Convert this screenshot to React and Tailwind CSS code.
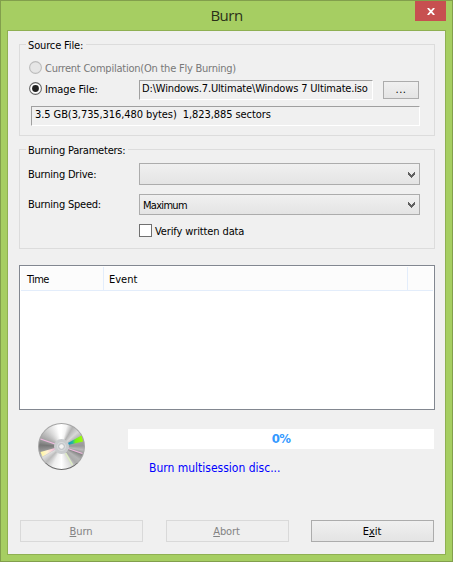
const Label = ({ className = '', children }) => (
  <span className={`block whitespace-pre leading-[14px] ${className}`}>{children}</span>
);

const Group = ({ title, titleClass, className, children }) => (
  <fieldset className={`relative border border-[#dcdcdc] ${className}`}>
    <div className={`absolute -top-[6px] left-[6px] h-[14px] bg-[#f0f0f0] pl-[2px] ${titleClass}`}>
      <Label>{title}</Label>
    </div>
    {children}
  </fieldset>
);

const Radio = ({ checked }) => (
  <svg width="13" height="13" viewBox="0 0 13 13" className="shrink-0">
    <circle
      cx="6.5"
      cy="6.5"
      r="5.9"
      fill={checked ? '#ffffff' : '#e6e6e6'}
      stroke={checked ? '#666666' : '#bcbcbc'}
      strokeWidth="1.1"
    />
    {checked && <circle cx="6.5" cy="6.5" r="3.4" fill="#212121" />}
  </svg>
);

const Combo = ({ value, className }) => (
  <div
    className={`flex w-[281px] justify-between border border-[#acacac] bg-linear-to-b from-[#f0f0f0] to-[#e4e4e4] pr-[4px] pl-[3px] ${className}`}
  >
    <Label className="pt-[4px] tracking-[-0.7px]">{value}</Label>
    <svg width="7" height="6" viewBox="0 0 7 6" className="mt-[7px]" shapeRendering="crispEdges">
      <path d="M0 0h1v1h1v1h1v1h1v-1h1v-1h1v-1h1v3h-1v1h-1v1h-1v1h-1v-1h-1v-1h-1v-1h-1z" fill="#606060" />
    </svg>
  </div>
);

const Disc = () => (
  <div className="relative size-[47px] rounded-full border border-[#a4a4a4] border-b-[#686868] bg-[conic-gradient(#fff_0deg,#f4f4f4_14deg,#b2b2b2_30deg,#d8d8d8_48deg,#aaa_65deg,#999_88deg,#b9b9b9_99deg,#888_112deg,#b5b5b5_126deg,#aaa_140deg,#ddd_154deg,#fff_180deg,#eee_204deg,#bbb_224deg,#ddd_239deg,#999_256deg,#777_274deg,#a0a0a0_290deg,#bbb_306deg,#ddd_326deg,#fff_350deg)]">
    <svg width="45" height="45" viewBox="0 0 45 45" className="block">
      <defs>
        <linearGradient id="green" x1="0" x2="1">
          <stop offset="0" stopColor="#168cc8" />
          <stop offset=".3" stopColor="#24b9a0" />
          <stop offset=".5" stopColor="#72f21c" />
          <stop offset="1" stopColor="#a2ff00" />
        </linearGradient>
        <linearGradient id="warm" x1="0" x2="1">
          <stop offset="0" stopColor="#fff79b" />
          <stop offset=".45" stopColor="#fff3d2" />
          <stop offset="1" stopColor="#f0b5db" />
        </linearGradient>
      </defs>
      <path d="M29 19L42.5 11.5L44 17.5L29 21z" fill="url(#green)" />
      <path d="M16 24L1.5 28L3.5 32.5L16 25.5z" fill="url(#warm)" />
      <path d="M1.5 15L16 20M29 24.5L43.5 29.5" stroke="#f0b9df" strokeWidth="1.3" />
      <path d="M26.5 29L33.5 41" stroke="#ddecc5" strokeWidth="1.5" />
      <circle cx="22.5" cy="22.5" r="6" fill="#d9dbdd" stroke="#c9ccce" strokeWidth="3" />
      <circle cx="22.5" cy="22.5" r="3" fill="#e4e4e4" stroke="#bcc0c3" strokeWidth="1" />
      <circle cx="22.5" cy="22.5" r="1.8" fill="#f4f4f4" />
    </svg>
  </div>
);

const Button = ({ disabled, children }) => (
  <button
    className={`h-[22px] w-[123px] border pt-[1px] pr-[1px] leading-[19px] tracking-[-0.1px] ${
      disabled
        ? 'border-[#d9d9d9] bg-[#efefef] text-[#838383]'
        : 'border-[#acacac] bg-linear-to-b from-[#f0f0f0] to-[#e4e4e4] text-black'
    }`}
    disabled={disabled}
  >
    {children}
  </button>
);

const Key = ({ children }) => (
  <span className="underline decoration-1 underline-offset-1">{children}</span>
);

const App = () => {
  return (
    <div className="flex h-[562px] w-[453px] flex-col border border-[#829f4c] bg-[#a6ce62] font-['DejaVu_Sans_Condensed','DejaVu_Sans',sans-serif] text-[11px] font-stretch-condensed text-black">
      <header className="grid h-[29px] grid-cols-[31px_1fr_31px] pr-[6px] pl-[6px]">
        <div />
        <h1 className="pt-[4px] text-center font-['Open_Sans','Noto_Sans',sans-serif] text-[15px] leading-[20px] tracking-[-0.5px] text-[#2b3019] font-stretch-normal">
          Burn
        </h1>
        <button className="flex h-[20px] w-[31px] items-center justify-center bg-[#c75050]">
          <svg width="8" height="7" viewBox="0 0 8 7" className="mt-[1px]">
            <path d="M.8 0L7.2 7M7.2 0L.8 7" stroke="#fff" strokeWidth="1.8" />
          </svg>
        </button>
      </header>

      <main className="mx-[6px] h-[525px] border border-[#8fb052] bg-[#f0f0f0] px-[11px] pt-[13px]">
        <Group
          title="Source File:"
          titleClass="w-[60px] tracking-[-0.15px]"
          className="h-[92px] w-[416px] pt-[16px]"
        >
          <div className="ml-[9px] flex h-[13px] items-center gap-[3px] text-[#787878]">
            <Radio />
            <Label className="pt-[2px] tracking-[-0.23px]">Current Compilation(On the Fly Burning)</Label>
          </div>
          <div className="mt-[6px] ml-[9px] flex h-[20px]">
            <div className="flex h-[17px] w-[110px] items-center gap-[3px]">
              <Radio checked />
              <Label className="pt-[2px] tracking-[-0.1px]">Image File:</Label>
            </div>
            <div className="h-[20px] w-[234px] border border-[#a0a0a0] border-r-white border-b-white pt-[1px] pl-[2px]">
              <Label className="tracking-[-0.16px]">D:\Windows.7.Ultimate\Windows 7 Ultimate.iso</Label>
            </div>
            <button className="mt-[1px] ml-[10px] h-[18px] w-[36px] border border-[#acacac] bg-linear-to-b from-[#f0f0f0] to-[#e4e4e4] leading-[16px] tracking-[0.5px]">
              ...
            </button>
          </div>
          <div className="mt-[6px] ml-[11px] h-[20px] w-[389px] border border-[#a0a0a0] border-r-white border-b-white pt-[1px] pl-[3px]">
            <Label className="tracking-[-0.08px]">3.5 GB(3,735,316,480 bytes)  1,823,885 sectors</Label>
          </div>
        </Group>

        <Group
          title="Burning Parameters:"
          titleClass="w-[102px] tracking-[-0.22px]"
          className="mt-[13px] h-[100px] w-[416px] pt-[13px] pl-[8px]"
        >
          <div className="flex h-[22px]">
            <Label className="w-[111px] pt-[5px] tracking-[-0.22px]">Burning Drive:</Label>
            <Combo className="h-[22px] pt-[1px]" />
          </div>
          <div className="mt-[9px] flex h-[21px]">
            <Label className="w-[111px] pt-[4px] tracking-[-0.22px]">Burning Speed:</Label>
            <Combo value="Maximum" className="h-[21px]" />
          </div>
          <div className="mt-[9px] ml-[111px] flex h-[13px] items-center gap-[3px]">
            <div className="size-[13px] border border-[#707070] bg-white" />
            <Label className="pt-[2px] tracking-[-0.12px]">Verify written data</Label>
          </div>
        </Group>

        <section className="mt-[16px] h-[145px] w-[416px] border border-[#828790] bg-white p-[1px]">
          <div className="flex h-[24px] border-b border-[#e3edfb] bg-[#fcfcfc]">
            <div className="w-[83px] border-r border-[#e3edfb] pt-[6px] pl-[6px]">
              <Label className="tracking-[-0.6px]">Time</Label>
            </div>
            <div className="w-[304px] border-r border-[#e3edfb] pt-[6px] pl-[5px]">
              <Label>Event</Label>
            </div>
          </div>
        </section>

        <section className="mt-[13px] flex h-[97px]">
          <div className="ml-[19px] w-[90px]">
            <Disc />
          </div>
          <div>
            <div className="mt-[6px] flex h-[20px] w-[306px] justify-center bg-white pt-[3px] text-[13px] font-bold text-[#3399ff]">
              <Label className="tracking-[-0.7px]">0%</Label>
            </div>
            <Label className="mt-[12px] ml-[21px] text-[12px] text-[#0000ff]">Burn multisession disc...</Label>
          </div>
        </section>

        <footer className="ml-[1px] flex w-[414px] justify-between">
          <Button disabled>
            <Key>B</Key>urn
          </Button>
          <Button disabled>
            <Key>A</Key>bort
          </Button>
          <Button>
            E<Key>x</Key>it
          </Button>
        </footer>
      </main>
    </div>
  );
};

export default App;
